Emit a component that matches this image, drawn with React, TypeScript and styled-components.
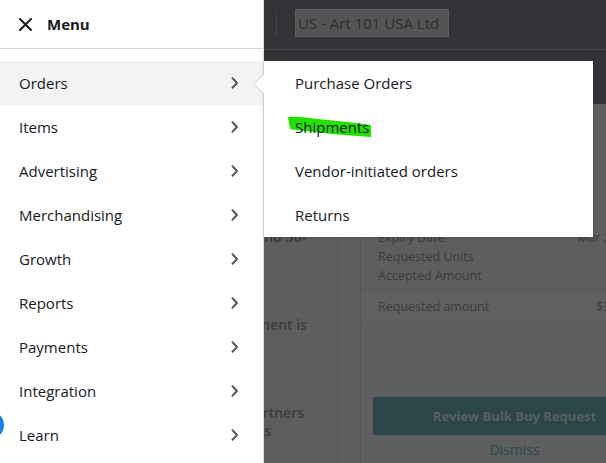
import React from "react";
import styled, { createGlobalStyle } from "styled-components";

const Global = createGlobalStyle`
  html, body { margin: 0; padding: 0; }
  body { font-family: "Open Sans", "Noto Sans", Arial, sans-serif; background: #5e5e5e; }
`;

const Stage = styled.div`
  position: relative;
  width: 606px;
  height: 463px;
  overflow: hidden;
  background: #5e5e5e;
`;

/* ---------- background page (dimmed) ---------- */
const Page = styled.div`
  display: flex;
  flex-direction: column;
  height: 100%;
`;

const TopBar = styled.div`
  height: 50px;
  box-sizing: border-box;
  background: #313337;
  border-bottom: 1px solid #45474b;
  display: flex;
  align-items: center;
  padding-left: 276px;
  gap: 18px;
`;

const BarDivider = styled.div`
  width: 1px;
  height: 22px;
  background: #45474b;
`;

const AccountBox = styled.div`
  height: 28px;
  box-sizing: border-box;
  padding: 0 9px 0 2px;
  background: #545454;
  border: 1px solid #5f5f5f;
  color: #2c2c2c;
  font-size: 15px;
  display: flex;
  align-items: center;
  margin-top: -3px;
`;

const SubBar = styled.div`
  height: 54px;
  background: #313337;
`;

const Content = styled.div`
  flex: 1;
  display: flex;
  padding-left: 120px;
`;

const LeftCol = styled.div`
  width: 217px;
  border-right: 1px solid #555;
  display: flex;
  flex-direction: column;
  align-items: flex-end;
  color: #3a3a3a;
  font-weight: 600;
  font-size: 14px;
  padding-top: 124px;
`;

const ColLine = styled.div<{ $gap: number; $end: number }>`
  margin-top: ${(p) => p.$gap}px;
  margin-right: ${(p) => 337 - p.$end}px;
  line-height: 18px;
  white-space: nowrap;
`;

const Gutter = styled.div`
  width: 22px;
  border-right: 1px solid #555;
`;

const Card = styled.div`
  flex: 1;
  display: flex;
  flex-direction: column;
`;

const Details = styled.div`
  padding: 124px 0 0 17px;
  display: flex;
  flex-direction: column;
  color: #3c3c3c;
  font-size: 12.5px;
`;

const DetailRow = styled.div`
  display: flex;
  justify-content: space-between;
  height: 19px;
  line-height: 19px;
  white-space: nowrap;
`;

const DetailValue = styled.span<{ $out: number }>`
  margin-right: ${(p) => -p.$out}px;
`;

const AmountRow = styled.div`
  margin-top: 6px;
  border-top: 1px solid #585858;
  border-bottom: 1px solid #585858;
  padding: 6px 0 6px 17px;
  display: flex;
  justify-content: space-between;
  color: #3c3c3c;
  font-size: 12.5px;
  white-space: nowrap;
  background: #606060;
`;

const Actions = styled.div`
  padding: 75px 0 0 12px;
  display: flex;
  flex-direction: column;
  align-items: stretch;
`;

const ReviewButton = styled.div`
  height: 38px;
  margin-right: -50px;
  background: #2c4548;
  color: #56615f;
  font-weight: 700;
  font-size: 13px;
  display: flex;
  align-items: center;
  justify-content: center;
`;

const Dismiss = styled.div`
  text-align: center;
  color: #2b4a50;
  font-size: 14px;
  margin-top: 5px;
  margin-right: -50px;
`;

/* ---------- drawer ---------- */
const Drawer = styled.nav`
  position: absolute;
  left: 0;
  top: 0;
  bottom: 0;
  width: 263px;
  background: #fff;
  border-right: 1px solid #dcdcdc;
  display: flex;
  flex-direction: column;
  color: #16191f;
`;

const DrawerHead = styled.div`
  height: 49px;
  box-sizing: border-box;
  border-bottom: 1px solid #d5d5d5;
  display: flex;
  align-items: center;
  padding-left: 19px;
  gap: 15px;
  font-weight: 700;
  font-size: 15px;
`;

const MenuList = styled.ul`
  list-style: none;
  margin: 0;
  padding: 12px 0 0;
`;

const MenuItem = styled.li<{ $active?: boolean }>`
  height: 44px;
  display: flex;
  align-items: center;
  justify-content: space-between;
  padding: 0 24px 0 19px;
  font-size: 15px;
  background: ${(p) => (p.$active ? "#f3f3f3" : "transparent")};
`;

const Chevron = () => (
  <svg width="8" height="12" viewBox="0 0 8 12" fill="none">
    <path d="M1.5 1.2 L6 6 L1.5 10.8" stroke="#545b64" strokeWidth="2" strokeLinecap="round" strokeLinejoin="round" />
  </svg>
);

const CloseIcon = () => (
  <svg width="13" height="13" viewBox="0 0 13 13" fill="none">
    <path d="M1 1 L12 12 M12 1 L1 12" stroke="#16191f" strokeWidth="2" strokeLinecap="round" />
  </svg>
);

/* ---------- flyout ---------- */
const Flyout = styled.div`
  position: absolute;
  left: 264px;
  top: 61px;
  width: 329px;
  background: #fff;
  box-shadow: 0 1px 4px rgba(0, 0, 0, 0.15);
  color: #16191f;
`;

const Pointer = styled.div`
  position: absolute;
  left: -9px;
  top: 14px;
  width: 0;
  height: 0;
  border-top: 9px solid transparent;
  border-bottom: 9px solid transparent;
  border-right: 9px solid #fff;
  filter: drop-shadow(-1px 0 1px rgba(0, 0, 0, 0.12));
`;

const SubList = styled.ul`
  list-style: none;
  margin: 0;
  padding: 0;
`;

const SubItem = styled.li`
  position: relative;
  height: 44px;
  display: flex;
  align-items: center;
  padding-left: 31px;
  font-size: 15px;
`;

const ItemLabel = styled.span`
  position: relative;
`;

const Marker = styled.svg`
  position: absolute;
  left: 24px;
  top: 0;
`;

const FloatButton = styled.div`
  position: absolute;
  left: -24px;
  top: 411px;
  width: 28px;
  height: 28px;
  border-radius: 50%;
  background: #1a7ee6;
`;

const menu = [
  "Orders",
  "Items",
  "Advertising",
  "Merchandising",
  "Growth",
  "Reports",
  "Payments",
  "Integration",
  "Learn",
];

const sub = ["Purchase Orders", "Shipments", "Vendor-initiated orders", "Returns"];

export default function App() {
  return (
    <Stage>
      <Global />
      <Page>
        <TopBar>
          <BarDivider />
          <AccountBox>US - Art 101 USA Ltd</AccountBox>
        </TopBar>
        <SubBar />
        <Content>
          <LeftCol>
            <ColLine $gap={0} $end={306}>Return and 30-</ColLine>
            <ColLine $gap={70} $end={307}>Fulfillment is</ColLine>
            <ColLine $gap={70} $end={304}>Partners</ColLine>
            <ColLine $gap={0} $end={271}>Services</ColLine>
          </LeftCol>
          <Gutter />
          <Card>
            <Details>
              <DetailRow>
                <span>Expiry Date</span>
                <DetailValue $out={12}>Mar 21</DetailValue>
              </DetailRow>
              <DetailRow>
                <span>Requested Units</span>
              </DetailRow>
              <DetailRow>
                <span>Accepted Amount</span>
              </DetailRow>
            </Details>
            <AmountRow>
              <span>Requested amount</span>
              <DetailValue $out={22}>$3.00</DetailValue>
            </AmountRow>
            <Actions>
              <ReviewButton>Review Bulk Buy Request</ReviewButton>
              <Dismiss>Dismiss</Dismiss>
            </Actions>
          </Card>
        </Content>
      </Page>

      <Drawer>
        <DrawerHead>
          <CloseIcon />
          <span>Menu</span>
        </DrawerHead>
        <MenuList>
          {menu.map((m, i) => (
            <MenuItem key={m} $active={i === 0}>
              <span>{m}</span>
              <Chevron />
            </MenuItem>
          ))}
        </MenuList>
      </Drawer>

      <Flyout>
        <Pointer />
        <SubList>
          {sub.map((s) => (
            <SubItem key={s}>
              {s === "Shipments" && (
                <Marker width="90" height="44" viewBox="0 0 90 44">
                  <path
                    d="M0 12 C10 11 20 13 30 14 C50 16 70 18 83 20 L83 32 C65 31 45 29 25 27 C15 26 8 25 2 24 Z"
                    fill="#22e000"
                  />
                </Marker>
              )}
              <ItemLabel>{s}</ItemLabel>
            </SubItem>
          ))}
        </SubList>
      </Flyout>

      <FloatButton />
    </Stage>
  );
}
